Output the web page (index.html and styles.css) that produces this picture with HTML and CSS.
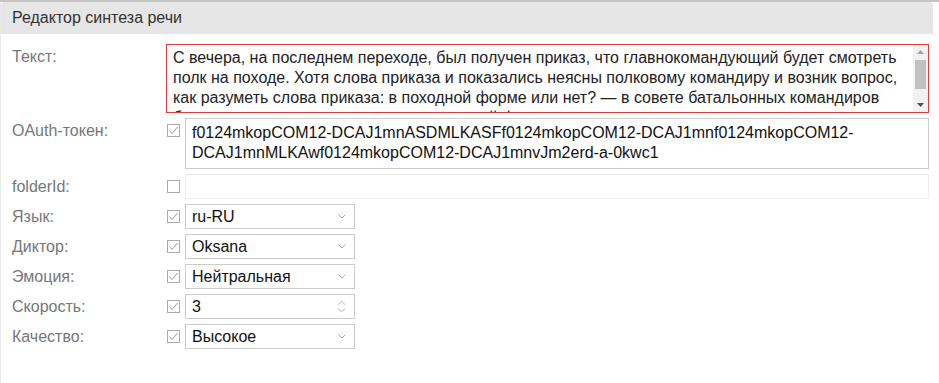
FILE: index.html
```html
<!DOCTYPE html>
<html lang="ru">
<head>
<meta charset="utf-8">
<link rel="stylesheet" href="styles.css">
</head>
<body>
<div class="topline"></div>
<div class="panel">
  <div class="panel-head">Редактор синтеза речи</div>
  <div class="form">
    <div class="label">Текст:</div>
    <div class="text-wrap span2">
      <textarea class="text-area">С вечера, на последнем переходе, был получен приказ, что главнокомандующий будет смотреть полк на походе. Хотя слова приказа и показались неясны полковому командиру и возник вопрос, как разуметь слова приказа: в походной форме или нет? — в совете батальонных командиров было решено представить полк в парадной форме на том основании, что всегда лучше перекланяться, чем не докланяться.</textarea>
      <div class="vscroll">
        <svg class="arrow" viewBox="0 0 7 4"><polygon points="0,4 3.5,0 7,4" fill="#a3a3a3"/></svg>
        <div class="thumb"></div>
        <svg class="arrow down" viewBox="0 0 7 4"><polygon points="0,0 7,0 3.5,4" fill="#505050"/></svg>
      </div>
    </div>

    <div class="label">OAuth-токен:</div>
    <div class="cb checked"><svg viewBox="0 0 13 13"><rect x="0.5" y="0.5" width="12" height="12" fill="#fff" stroke="#aaa"/><path d="M2.5 6.8 L5.2 9.4 L10.6 3" fill="none" stroke="#999" stroke-width="1"/></svg></div>
    <div class="field token">f0124mkopCOM12-DCAJ1mnASDMLKASFf0124mkopCOM12-DCAJ1mnf0124mkopCOM12-DCAJ1mnMLKAwf0124mkopCOM12-DCAJ1mnvJm2erd-a-0kwc1</div>

    <div class="label">folderId:</div>
    <div class="cb"><svg viewBox="0 0 13 13"><rect x="0.5" y="0.5" width="12" height="12" fill="#fff" stroke="#aaa"/></svg></div>
    <div class="field empty"></div>

    <div class="label">Язык:</div>
    <div class="cb checked"><svg viewBox="0 0 13 13"><rect x="0.5" y="0.5" width="12" height="12" fill="#fff" stroke="#aaa"/><path d="M2.5 6.8 L5.2 9.4 L10.6 3" fill="none" stroke="#999" stroke-width="1"/></svg></div>
    <div class="field select"><span>ru-RU</span><svg class="chev" viewBox="0 0 8 5"><path d="M0.5 0.5 L4 4 L7.5 0.5" fill="none" stroke="#aaa"/></svg></div>

    <div class="label">Диктор:</div>
    <div class="cb checked"><svg viewBox="0 0 13 13"><rect x="0.5" y="0.5" width="12" height="12" fill="#fff" stroke="#aaa"/><path d="M2.5 6.8 L5.2 9.4 L10.6 3" fill="none" stroke="#999" stroke-width="1"/></svg></div>
    <div class="field select"><span>Oksana</span><svg class="chev" viewBox="0 0 8 5"><path d="M0.5 0.5 L4 4 L7.5 0.5" fill="none" stroke="#aaa"/></svg></div>

    <div class="label">Эмоция:</div>
    <div class="cb checked"><svg viewBox="0 0 13 13"><rect x="0.5" y="0.5" width="12" height="12" fill="#fff" stroke="#aaa"/><path d="M2.5 6.8 L5.2 9.4 L10.6 3" fill="none" stroke="#999" stroke-width="1"/></svg></div>
    <div class="field select"><span>Нейтральная</span><svg class="chev" viewBox="0 0 8 5"><path d="M0.5 0.5 L4 4 L7.5 0.5" fill="none" stroke="#aaa"/></svg></div>

    <div class="label">Скорость:</div>
    <div class="cb checked"><svg viewBox="0 0 13 13"><rect x="0.5" y="0.5" width="12" height="12" fill="#fff" stroke="#aaa"/><path d="M2.5 6.8 L5.2 9.4 L10.6 3" fill="none" stroke="#999" stroke-width="1"/></svg></div>
    <div class="field select"><span>3</span><svg class="spin" viewBox="0 0 10 14"><path d="M1 5 L5 1 L9 5" fill="none" stroke="#aaa"/><path d="M1 9 L5 13 L9 9" fill="none" stroke="#aaa"/></svg></div>

    <div class="label">Качество:</div>
    <div class="cb checked"><svg viewBox="0 0 13 13"><rect x="0.5" y="0.5" width="12" height="12" fill="#fff" stroke="#aaa"/><path d="M2.5 6.8 L5.2 9.4 L10.6 3" fill="none" stroke="#999" stroke-width="1"/></svg></div>
    <div class="field select"><span>Высокое</span><svg class="chev" viewBox="0 0 8 5"><path d="M0.5 0.5 L4 4 L7.5 0.5" fill="none" stroke="#aaa"/></svg></div>
  </div>
</div>
</body>
</html>
```
FILE: styles.css
```css
html, body {
  margin: 0;
  padding: 0;
  background: #fff;
  font-family: "Liberation Sans", Arial, sans-serif;
}
.topline {
  height: 2px;
  background: #c4c4c4;
}
.panel {
  width: 933px;
  border-left: 1px solid #e8e8e8;
  height: 381px;
  box-sizing: border-box;
}
.panel-head {
  background: #e6e6e6;
  height: 32px;
  line-height: 32px;
  padding-left: 11px;
  font-size: 16px;
  color: #333;
  border-radius: 4px 4px 0 0;
}
.form {
  display: grid;
  grid-template-columns: 154px 19px 744px;
  row-gap: 5px;
  padding: 10px 0 0 11px;
}
.label {
  font-size: 16px;
  color: #777;
  line-height: 25px;
}
.span2 {
  grid-column: 2 / 4;
}
.text-wrap {
  position: relative;
  width: 763px;
  height: 69px;
}
.text-area {
  display: block;
  box-sizing: border-box;
  width: 763px;
  height: 69px;
  border: 1px solid #dd3c3c;
  padding: 3px 21px 3px 6px;
  margin: 0;
  font-family: "Liberation Sans", Arial, sans-serif;
  font-size: 16px;
  line-height: 20px;
  color: #222;
  resize: none;
  overflow: hidden;
  outline: none;
}
.vscroll {
  position: absolute;
  top: 1px;
  right: 1px;
  bottom: 1px;
  width: 15px;
  background: #f1f1f1;
  display: flex;
  flex-direction: column;
  align-items: center;
}
.arrow {
  width: 7px;
  height: 4px;
  margin-top: 5px;
  flex: none;
}
.arrow.down {
  margin-top: auto;
  margin-bottom: 5px;
}
.thumb {
  width: 11px;
  height: 29px;
  margin-top: 6px;
  background: #c1c1c1;
  flex: none;
}
.cb {
  display: flex;
  align-items: flex-start;
  padding-top: 6px;
  padding-left: 1px;
}
.cb svg {
  width: 13px;
  height: 13px;
  display: block;
}
.field {
  box-sizing: border-box;
  border: 1px solid #ccc;
  background: #fff;
  font-size: 16px;
  color: #111;
  padding: 0 6px;
}
.token {
  height: 51px;
  line-height: 20px;
  padding-top: 4px;
}
.empty {
  height: 25px;
  border-color: #ececec;
}
.select {
  width: 170px;
  height: 25px;
  display: flex;
  align-items: center;
  justify-content: space-between;
  padding-right: 8px;
}
.chev {
  width: 8px;
  height: 5px;
}
.spin {
  width: 9px;
  height: 13px;
}
```
